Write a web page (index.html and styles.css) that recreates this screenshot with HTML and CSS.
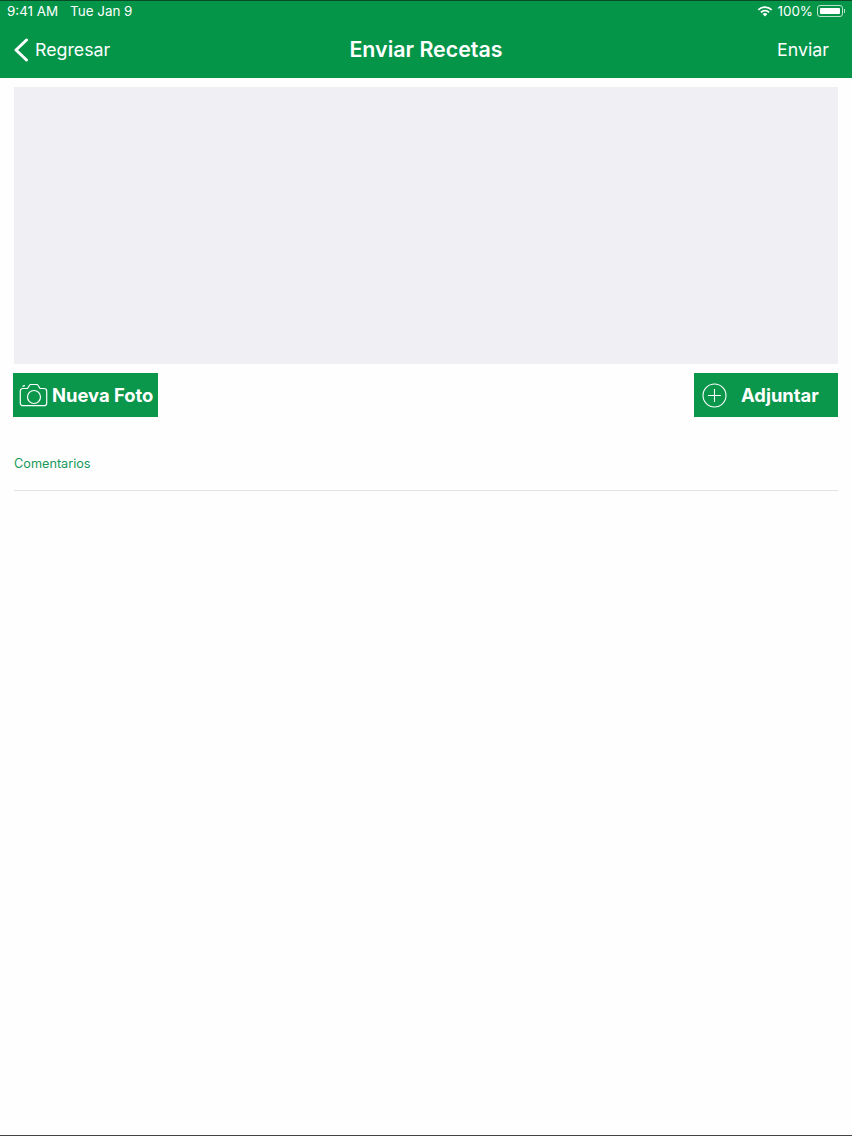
FILE: index.html
```html
<!DOCTYPE html>
<html lang="es">

<head>
    <meta charset="UTF-8">
    <meta name="viewport" content="width=device-width, initial-scale=1.0">
    <title>Enviar Recetas</title>
    <link rel="stylesheet" href="styles.css">
</head>

<body>
    <header class="top">
        <div class="status">
            <div class="status-left">
                <span>9:41 AM</span>
                <span>Tue Jan 9</span>
            </div>
            <div class="status-right">
                <svg class="wifi" width="16" height="12" viewBox="0 0 16 12">
                    <path d="M8 11.600 5.600 9.100a3.400 3.400 0 0 1 4.800 0z" fill="#fff" />
                    <path d="M3.900 7.400a5.800 5.800 0 0 1 8.200 0" fill="none" stroke="#fff" stroke-width="1.700" />
                    <path d="M1.300 4.800a9.500 9.500 0 0 1 13.400 0" fill="none" stroke="#fff" stroke-width="1.700" />
                </svg>
                <span>100%</span>
                <div class="battery">
                    <div class="battery-fill"></div>
                </div>
                <div class="battery-tip"></div>
            </div>
        </div>
        <nav class="nav">
            <a class="back">
                <svg width="16" height="24" viewBox="0 0 16 24">
                    <path d="M13.500 2 3 12l10.500 10" fill="none" stroke="#fff" stroke-width="3" stroke-linecap="round" stroke-linejoin="round" />
                </svg>
                Regresar
            </a>
            <h1 class="title">Enviar Recetas</h1>
            <a class="send">Enviar</a>
        </nav>
    </header>

    <main class="content">
        <div class="photo"></div>
        <div class="actions">
            <button class="btn btn-photo">
                <svg width="29" height="24" viewBox="0 0 29 24">
                    <path d="M4 5.500h4.500l2-3.300c.2-.4.600-.7 1.100-.7h6.300c.5 0 .9.300 1.100.7l2 3.300H25c1.400 0 2.700 1.300 2.700 2.700v12c0 1.500-1.200 2.500-2.700 2.500H4c-1.500 0-2.700-1-2.700-2.500v-12C1.300 6.800 2.600 5.500 4 5.500z" fill="none" stroke="#fff" stroke-width="1.200" />
                    <circle cx="15" cy="14" r="6.500" fill="none" stroke="#fff" stroke-width="1.200" />
                    <path d="M3.500 3.400c.7-.5 1.500-.7 2.500-.7" fill="none" stroke="#fff" stroke-width="1.200" />
                </svg>
                Nueva Foto
            </button>
            <button class="btn btn-attach">
                <svg width="25" height="25" viewBox="0 0 25 25">
                    <circle cx="12.500" cy="12.500" r="11.500" fill="none" stroke="#fff" stroke-width="1.100" />
                    <path d="M12.500 6v13M6 12.500h13" stroke="#fff" stroke-width="1.100" />
                </svg>
                Adjuntar
            </button>
        </div>
        <div class="comments">Comentarios</div>
    </main>
</body>

</html>
```

FILE: styles.css
```css
* {
    box-sizing: border-box;
}

html,
body {
    height: 100%;
}

body {
    margin: 0;
    display: flex;
    flex-direction: column;
    font-family: Inter, "Liberation Sans", sans-serif;
    background-color: #fefefe;
    border-bottom: 1px solid #444;
}

.top {
    height: 78px;
    background-color: #049549;
    border-top: 1px solid #0b4a26;
    color: #fff;
}

.status {
    display: flex;
    justify-content: space-between;
    align-items: center;
    height: 20px;
    padding: 0 7px;
    font-size: 13.400px;
}

.status-left {
    display: flex;
    gap: 12px;
}

.status-right {
    display: flex;
    align-items: center;
}

.wifi {
    margin-right: 5px;
}

.battery {
    width: 26px;
    height: 12px;
    margin-left: 4px;
    padding: 2px;
    border: 1px solid #bfe3cd;
    border-radius: 3px;
}

.battery-fill {
    height: 100%;
    background-color: #fff;
    border-radius: 1px;
}

.battery-tip {
    width: 1px;
    height: 4px;
    margin-left: 1px;
    background-color: #bfe3cd;
}

.nav {
    display: flex;
    justify-content: space-between;
    align-items: center;
    height: 57px;
    padding: 0 23px 0 13px;
    font-size: 17.800px;
}

.back {
    display: flex;
    align-items: center;
    gap: 6px;
    width: 160px;
}

.title {
    margin: 0 0 1px;
    font-size: 21.400px;
    font-weight: 600;
}

.send {
    width: 150px;
    text-align: right;
}

.content {
    flex: 1;
    padding: 9px 14px 0 13px;
}

.photo {
    height: 277px;
    margin-left: 1px;
    background-color: #efeff4;
}

.actions {
    display: flex;
    justify-content: space-between;
    margin-top: 9px;
}

.btn {
    display: flex;
    align-items: center;
    height: 44px;
    border: none;
    background-color: #0a964b;
    color: #fff;
    font-family: inherit;
    font-size: 18.400px;
    font-weight: 700;
}

.btn-photo {
    width: 145px;
    padding: 0 0 0 6px;
    gap: 4px;
}

.btn-attach {
    width: 144px;
    padding: 0 0 0 8px;
    gap: 14px;
}

.comments {
    margin: 26px 0 0 1px;
    padding: 13px 0 18px;
    border-bottom: 1px solid #e2e2e2;
    color: #16995a;
    font-size: 12.700px;
    line-height: 16px;
}
```
